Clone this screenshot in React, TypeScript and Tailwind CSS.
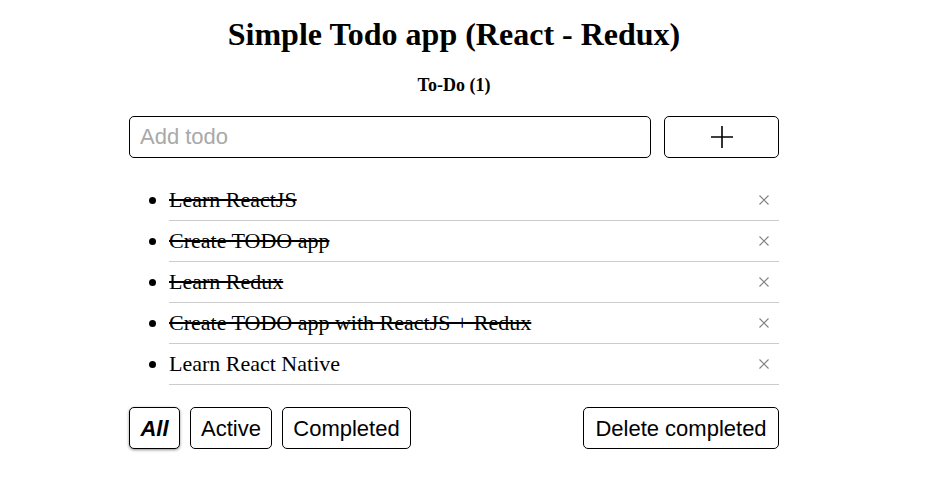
import { useState } from 'react'

type Todo = { id: number; text: string; done: boolean }

const initial: Todo[] = [
  { id: 1, text: 'Learn ReactJS', done: true },
  { id: 2, text: 'Create TODO app', done: true },
  { id: 3, text: 'Learn Redux', done: true },
  { id: 4, text: 'Create TODO app with ReactJS + Redux', done: true },
  { id: 5, text: 'Learn React Native', done: false },
]

const sans = "font-['Liberation_Sans',Arial,sans-serif]"

const filters = [
  { key: 'all', label: 'All', w: 'w-[51px]' },
  { key: 'active', label: 'Active', w: 'w-[82px]' },
  { key: 'completed', label: 'Completed', w: 'w-[129px]' },
] as const

export default function App() {
  const [todos, setTodos] = useState<Todo[]>(initial)
  const [filter, setFilter] = useState<'all' | 'active' | 'completed'>('all')
  const [text, setText] = useState('')

  const shown = todos.filter(t => filter === 'all' || (filter === 'active' ? !t.done : t.done))
  const left = todos.filter(t => !t.done).length

  function add() {
    if (!text.trim()) return
    setTodos(prev => [...prev, { id: Date.now(), text: text.trim(), done: false }])
    setText('')
  }

  const btn = `h-[42px] px-0 border border-black rounded-[5px] bg-white text-[22px] text-black whitespace-nowrap flex items-center justify-center ${sans}`

  return (
    <div className="min-h-screen bg-white font-['Liberation_Serif','Times_New_Roman',serif] text-black">
      <div className="w-[650px] ml-[129px] pt-[16px]">
        <h1 className="text-center text-[32px] font-bold leading-[37px]">Simple Todo app (React - Redux)</h1>
        <h3 className="mt-[22px] text-center text-[18px] font-bold leading-[21px]">To-Do ({left})</h3>

        <div className="mt-[20px] flex gap-[13px]">
          <input
            value={text}
            onChange={e => setText(e.target.value)}
            onKeyDown={e => e.key === 'Enter' && add()}
            placeholder="Add todo"
            className={`flex-1 h-[42px] px-[10px] border border-black rounded-[5px] text-[22px] placeholder:text-[#a9a9a9] outline-none ${sans}`}
          />
          <button onClick={add} className="w-[115px] h-[42px] border border-black rounded-[5px] bg-white flex items-center justify-center">
            <svg width="22" height="22" viewBox="0 0 22 22">
              <path d="M11 0v22M0 11h22" stroke="#000" strokeWidth="1.6" />
            </svg>
          </button>
        </div>

        <ul className="mt-[22px] pl-[40px] list-disc">
          {shown.map(t => (
            <li key={t.id} className="border-b border-[#cccccc] text-[22px] leading-[40px]">
              <div className="flex items-center justify-between">
                <span
                  onClick={() => setTodos(prev => prev.map(x => (x.id === t.id ? { ...x, done: !x.done } : x)))}
                  className={`cursor-pointer ${t.done ? 'line-through' : ''}`}
                >
                  {t.text}
                </span>
                <button onClick={() => setTodos(prev => prev.filter(x => x.id !== t.id))} className="mr-[10px] p-0">
                  <svg width="10" height="10" viewBox="0 0 10 10" className="block">
                    <path d="M0.5 0.5l9 9M9.5 0.5l-9 9" stroke="#808080" strokeWidth="1.1" />
                  </svg>
                </button>
              </div>
            </li>
          ))}
        </ul>

        <div className="mt-[22px] flex items-center">
          <div className="flex gap-[10px]">
            {filters.map(f => (
              <button
                key={f.key}
                onClick={() => setFilter(f.key)}
                className={`${btn} ${f.w} ${filter === f.key ? 'font-bold italic shadow-[0_1px_3px_rgba(0,0,0,0.45)]' : ''}`}
              >
                {f.label}
              </button>
            ))}
          </div>
          <button onClick={() => setTodos(prev => prev.filter(t => !t.done))} className={`${btn} w-[196px] ml-auto`}>
            Delete completed
          </button>
        </div>
      </div>
    </div>
  )
}
